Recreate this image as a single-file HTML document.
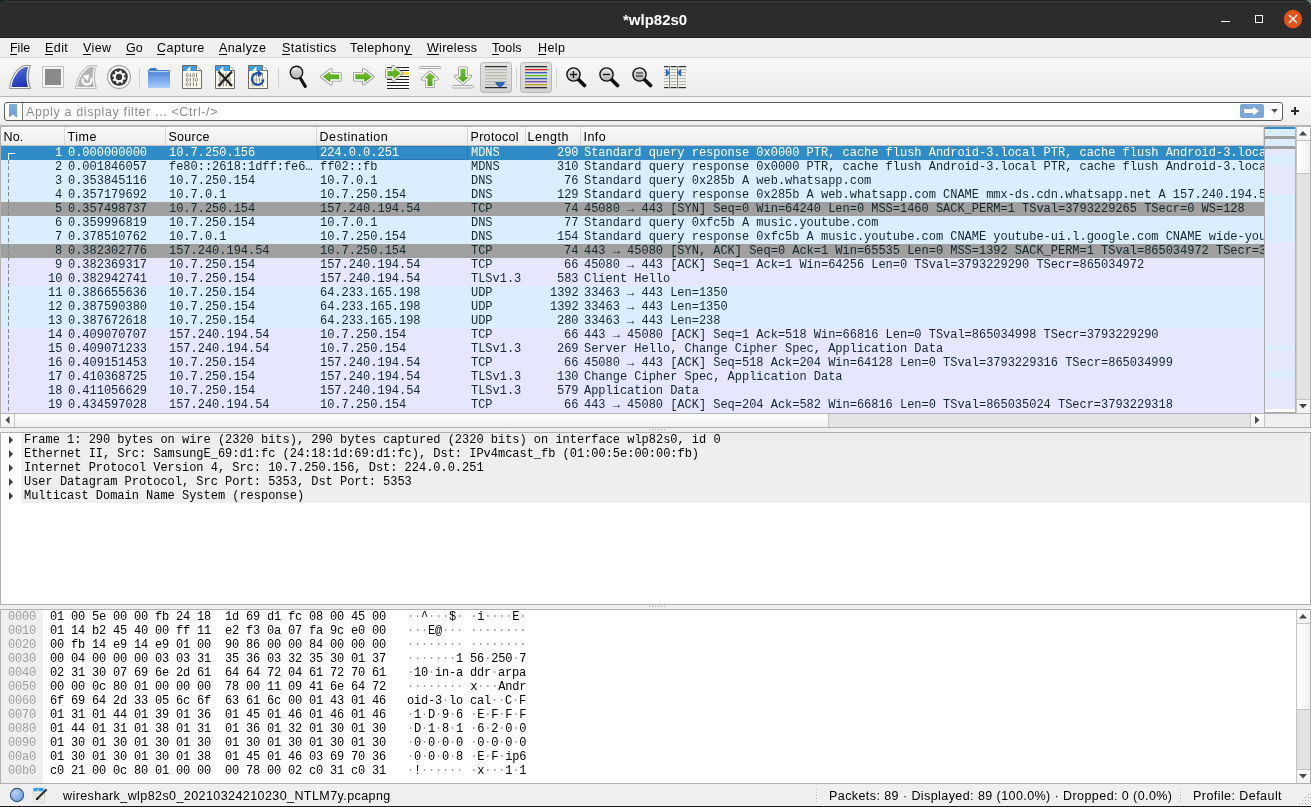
<!DOCTYPE html>
<html><head><meta charset="utf-8"><style>
html,body{margin:0;padding:0}
body{width:1311px;height:807px;overflow:hidden;position:relative;background:#efefef;font-family:"Liberation Sans",sans-serif}
#root{position:absolute;left:0;top:0;width:1311px;height:807px;overflow:hidden;will-change:transform}
.r{position:absolute}
.t{position:absolute;white-space:pre;line-height:normal;font-family:"Liberation Sans",sans-serif}
.m{position:absolute;white-space:pre;font-family:"Liberation Mono",monospace;font-size:12px;letter-spacing:-0.02px;line-height:14px;height:14px}
.h{letter-spacing:-0.2px}
</style></head><body><div id="root">
<div class="r" style="left:0px;top:0px;width:1311px;height:38px;background:#2c2c2c;"></div>
<div class="r" style="left:0px;top:0px;width:1311px;height:1px;background:#1f2020;"></div>
<div class="r" style="left:6px;top:1px;width:1299px;height:1px;background:#3c3c3c;"></div>
<div class="r" style="left:0px;top:37px;width:1311px;height:1px;background:#202020;"></div>
<svg class="r" style="left:0;top:0" width="7" height="7"><path d="M6.5,0 A6.5,6.5 0 0 0 0,6.5 V0 Z" fill="#1a2328"/><path d="M0.8,6.5 A5.7,5.7 0 0 1 6.5,0.8" fill="none" stroke="#3c3c3c" stroke-width="0.9"/></svg>
<svg class="r" style="left:1304px;top:0" width="7" height="7"><path d="M0.5,0 A6.5,6.5 0 0 1 7,6.5 V0 Z" fill="#6a7f7b"/><path d="M0.5,0.8 A5.7,5.7 0 0 1 6.2,6.5" fill="none" stroke="#2f3232" stroke-width="0.9"/></svg>
<div class="t" style="left:623px;top:11px;font-size:15px;color:#ffffff;letter-spacing:0.000px;font-weight:bold;">*wlp82s0</div>
<div class="r" style="left:1221px;top:20.5px;width:8.5px;height:1.6px;background:#ffffff;"></div>
<div class="r" style="left:1255px;top:15px;width:8px;height:8px;background:transparent;border:1.5px solid #fff;box-sizing:border-box"></div>
<svg class="r" style="left:1283px;top:9px" width="20" height="20" viewBox="0 0 20 20"><circle cx="10" cy="10" r="9.2" fill="#e2521d"/><path d="M6 6L14 14M14 6L6 14" stroke="#fff" stroke-width="1.4"/></svg>
<div class="r" style="left:0px;top:38px;width:1311px;height:19px;background:#efefef;"></div>
<div class="t" style="left:10px;top:41px;font-size:12.5px;color:#000;letter-spacing:-0.016px;">File</div>
<div class="r" style="left:10px;top:54px;width:7px;height:1px;background:#000;"></div>
<div class="t" style="left:45px;top:41px;font-size:12.5px;color:#000;letter-spacing:0.426px;">Edit</div>
<div class="r" style="left:45px;top:54px;width:8px;height:1px;background:#000;"></div>
<div class="t" style="left:83px;top:41px;font-size:12.5px;color:#000;letter-spacing:0.402px;">View</div>
<div class="r" style="left:83px;top:54px;width:8px;height:1px;background:#000;"></div>
<div class="t" style="left:126px;top:41px;font-size:12.5px;color:#000;letter-spacing:-0.023px;">Go</div>
<div class="r" style="left:126px;top:54px;width:9px;height:1px;background:#000;"></div>
<div class="t" style="left:157px;top:41px;font-size:12.5px;color:#000;letter-spacing:0.462px;">Capture</div>
<div class="r" style="left:157px;top:54px;width:8px;height:1px;background:#000;"></div>
<div class="t" style="left:219px;top:41px;font-size:12.5px;color:#000;letter-spacing:0.402px;">Analyze</div>
<div class="r" style="left:219px;top:54px;width:8px;height:1px;background:#000;"></div>
<div class="t" style="left:282px;top:41px;font-size:12.5px;color:#000;letter-spacing:0.484px;">Statistics</div>
<div class="r" style="left:282px;top:54px;width:8px;height:1px;background:#000;"></div>
<div class="t" style="left:350px;top:41px;font-size:12.5px;color:#000;letter-spacing:0.408px;">Telephony</div>
<div class="r" style="left:405px;top:54px;width:7px;height:1px;background:#000;"></div>
<div class="t" style="left:427px;top:41px;font-size:12.5px;color:#000;letter-spacing:0.287px;">Wireless</div>
<div class="r" style="left:427px;top:54px;width:12px;height:1px;background:#000;"></div>
<div class="t" style="left:492px;top:41px;font-size:12.5px;color:#000;letter-spacing:0.075px;">Tools</div>
<div class="r" style="left:492px;top:54px;width:7px;height:1px;background:#000;"></div>
<div class="t" style="left:538px;top:41px;font-size:12.5px;color:#000;letter-spacing:0.410px;">Help</div>
<div class="r" style="left:538px;top:54px;width:8px;height:1px;background:#000;"></div>
<div class="r" style="left:0px;top:57px;width:1311px;height:1px;background:#d6d6d6;"></div>
<div class="r" style="left:0px;top:58px;width:1311px;height:38px;background:linear-gradient(#f8f8f8,#ececec);"></div>
<div class="r" style="left:0px;top:96px;width:1311px;height:1px;background:#b8b8b8;"></div>
<svg class="r" style="left:0;top:0" width="1311" height="97" viewBox="0 0 1311 97"><defs><linearGradient id="gBlue" x1="0.3" y1="0" x2="0.6" y2="1"><stop offset="0" stop-color="#5a72d8"/><stop offset="0.5" stop-color="#3550c8"/><stop offset="1" stop-color="#1e34b0"/></linearGradient><linearGradient id="gFold" x1="0" y1="0" x2="0" y2="1"><stop offset="0" stop-color="#3b76cc"/><stop offset="1" stop-color="#a9ccff"/></linearGradient><linearGradient id="gGreen" x1="0" y1="0" x2="0" y2="1"><stop offset="0" stop-color="#74c232"/><stop offset="1" stop-color="#4ea414"/></linearGradient><linearGradient id="gLens" x1="0" y1="0" x2="0" y2="1"><stop offset="0" stop-color="#e8e8e8"/><stop offset="1" stop-color="#b0b0b0"/></linearGradient><linearGradient id="gBtn" x1="0" y1="0" x2="0" y2="1"><stop offset="0" stop-color="#e2e2e2"/><stop offset="1" stop-color="#d2d2d2"/></linearGradient></defs><path d="M9,89 C10,77 16.5,67 25,65 H31.2 C28.3,71.5 28.3,81 31.2,89 Z" fill="#939393"/><path d="M10.2,88 C11.2,77.5 17.3,68 25.3,66 H29.7 C27.1,72 27.1,81 29.6,88 Z" fill="#fff"/><path d="M11.5,87 C12.5,78 18.2,69 25.6,67 H28.3 C26,72.5 26,81 28.1,87 Z" fill="url(#gBlue)"/><rect x="42.5" y="66.5" width="21" height="21" fill="#f6f6f6" stroke="#c2c2c2" stroke-width="1"/><rect x="45" y="69" width="16" height="16" fill="#8a8a8a"/><path d="M75,89 C76,77 82.5,67 91,65 H97.2 C94.3,71.5 94.3,81 97.2,89 Z" fill="#bdbdbd"/><path d="M76.2,88 C77.2,77.5 83.3,68 91.3,66 H95.7 C93.1,72 93.1,81 95.6,88 Z" fill="#f6f6f6"/><path d="M77.5,87 C78.5,78 84.2,69 91.6,67 H94.3 C92,72.5 92,81 94.1,87 Z" fill="#b3b3b3"/><path d="M82.6,78.5 A4.6,4.6 0 1 0 91.2,78" fill="none" stroke="#fff" stroke-width="2.3"/><path d="M82.3,75.8 L89.2,74.6 L87.8,81 Z" fill="#fff"/><circle cx="119" cy="77" r="11.4" fill="#fdfdfd" stroke="#9e9e9e" stroke-width="1.1"/><circle cx="119" cy="77" r="8.8" fill="#383838"/><rect x="117.9" y="70.3" width="2.2" height="3" fill="#fff" transform="rotate(15 119 77)"/><rect x="117.9" y="70.3" width="2.2" height="3" fill="#fff" transform="rotate(60 119 77)"/><rect x="117.9" y="70.3" width="2.2" height="3" fill="#fff" transform="rotate(105 119 77)"/><rect x="117.9" y="70.3" width="2.2" height="3" fill="#fff" transform="rotate(150 119 77)"/><rect x="117.9" y="70.3" width="2.2" height="3" fill="#fff" transform="rotate(195 119 77)"/><rect x="117.9" y="70.3" width="2.2" height="3" fill="#fff" transform="rotate(240 119 77)"/><rect x="117.9" y="70.3" width="2.2" height="3" fill="#fff" transform="rotate(285 119 77)"/><rect x="117.9" y="70.3" width="2.2" height="3" fill="#fff" transform="rotate(330 119 77)"/><circle cx="119" cy="77" r="5.3" fill="#fff"/><circle cx="119" cy="77" r="3.2" fill="#383838"/><rect x="139" y="68" width="1" height="19" fill="#d0d0d0"/><path d="M148,70 H149 Q149,68 151,68 H156 Q157,68 157,70 H169 Q170,70 170,71 V87 Q170,88 169,88 H149 Q148,88 148,87 Z" fill="url(#gFold)"/><rect x="149" y="71.3" width="20" height="0.8" fill="#e8f0ff"/><path d="M182.5,65.5 H196.5 L201.5,70.5 V88.5 H182.5 Z" fill="#fbfaec" stroke="#6a6a6a" stroke-width="1"/><path d="M183,66 H196.3 L201,70.7 V71 H183 Z" fill="#3a9fe6"/><path d="M186.5,71 C187.5,68.5 189.5,67 191,66.6 C190.2,68 190,69.8 190.6,71 Z" fill="#fff"/><path d="M196.5,65.5 V70.5 H201.5" fill="#fff" stroke="#6a6a6a" stroke-width="0.9"/><ellipse cx="187.2" cy="75.2" rx="1.1" ry="1.7" fill="none" stroke="#8a8a84" stroke-width="0.9"/><path d="M190.29999999999998,73.4 V77.0" stroke="#8a8a84" stroke-width="1.1"/><ellipse cx="193.39999999999998" cy="75.2" rx="1.1" ry="1.7" fill="none" stroke="#8a8a84" stroke-width="0.9"/><path d="M196.5,73.4 V77.0" stroke="#8a8a84" stroke-width="1.1"/><ellipse cx="187.2" cy="79.8" rx="1.1" ry="1.7" fill="none" stroke="#8a8a84" stroke-width="0.9"/><path d="M190.29999999999998,78.0 V81.6" stroke="#8a8a84" stroke-width="1.1"/><path d="M193.39999999999998,78.0 V81.6" stroke="#8a8a84" stroke-width="1.1"/><ellipse cx="196.5" cy="79.8" rx="1.1" ry="1.7" fill="none" stroke="#8a8a84" stroke-width="0.9"/><ellipse cx="187.2" cy="84.4" rx="1.1" ry="1.7" fill="none" stroke="#8a8a84" stroke-width="0.9"/><path d="M190.29999999999998,82.60000000000001 V86.2" stroke="#8a8a84" stroke-width="1.1"/><path d="M193.39999999999998,82.60000000000001 V86.2" stroke="#8a8a84" stroke-width="1.1"/><path d="M196.5,82.60000000000001 V86.2" stroke="#8a8a84" stroke-width="1.1"/><path d="M215.5,65.5 H229.5 L234.5,70.5 V88.5 H215.5 Z" fill="#fbfaec" stroke="#6a6a6a" stroke-width="1"/><path d="M216,66 H229.3 L234,70.7 V71 H216 Z" fill="#3a9fe6"/><path d="M219.5,71 C220.5,68.5 222.5,67 224,66.6 C223.2,68 223,69.8 223.6,71 Z" fill="#fff"/><path d="M229.5,65.5 V70.5 H234.5" fill="#fff" stroke="#6a6a6a" stroke-width="0.9"/><ellipse cx="220.2" cy="75.2" rx="1.1" ry="1.7" fill="none" stroke="#8a8a84" stroke-width="0.9"/><path d="M223.29999999999998,73.4 V77.0" stroke="#8a8a84" stroke-width="1.1"/><ellipse cx="226.39999999999998" cy="75.2" rx="1.1" ry="1.7" fill="none" stroke="#8a8a84" stroke-width="0.9"/><path d="M229.5,73.4 V77.0" stroke="#8a8a84" stroke-width="1.1"/><ellipse cx="220.2" cy="79.8" rx="1.1" ry="1.7" fill="none" stroke="#8a8a84" stroke-width="0.9"/><path d="M223.29999999999998,78.0 V81.6" stroke="#8a8a84" stroke-width="1.1"/><path d="M226.39999999999998,78.0 V81.6" stroke="#8a8a84" stroke-width="1.1"/><ellipse cx="229.5" cy="79.8" rx="1.1" ry="1.7" fill="none" stroke="#8a8a84" stroke-width="0.9"/><ellipse cx="220.2" cy="84.4" rx="1.1" ry="1.7" fill="none" stroke="#8a8a84" stroke-width="0.9"/><path d="M223.29999999999998,82.60000000000001 V86.2" stroke="#8a8a84" stroke-width="1.1"/><path d="M226.39999999999998,82.60000000000001 V86.2" stroke="#8a8a84" stroke-width="1.1"/><path d="M229.5,82.60000000000001 V86.2" stroke="#8a8a84" stroke-width="1.1"/><path d="M248.5,65.5 H262.5 L267.5,70.5 V88.5 H248.5 Z" fill="#fbfaec" stroke="#6a6a6a" stroke-width="1"/><path d="M249,66 H262.3 L267,70.7 V71 H249 Z" fill="#3a9fe6"/><path d="M252.5,71 C253.5,68.5 255.5,67 257,66.6 C256.2,68 256,69.8 256.6,71 Z" fill="#fff"/><path d="M262.5,65.5 V70.5 H267.5" fill="#fff" stroke="#6a6a6a" stroke-width="0.9"/><ellipse cx="253.2" cy="75.2" rx="1.1" ry="1.7" fill="none" stroke="#8a8a84" stroke-width="0.9"/><path d="M256.3,73.4 V77.0" stroke="#8a8a84" stroke-width="1.1"/><ellipse cx="259.4" cy="75.2" rx="1.1" ry="1.7" fill="none" stroke="#8a8a84" stroke-width="0.9"/><path d="M262.5,73.4 V77.0" stroke="#8a8a84" stroke-width="1.1"/><ellipse cx="253.2" cy="79.8" rx="1.1" ry="1.7" fill="none" stroke="#8a8a84" stroke-width="0.9"/><path d="M256.3,78.0 V81.6" stroke="#8a8a84" stroke-width="1.1"/><path d="M259.4,78.0 V81.6" stroke="#8a8a84" stroke-width="1.1"/><ellipse cx="262.5" cy="79.8" rx="1.1" ry="1.7" fill="none" stroke="#8a8a84" stroke-width="0.9"/><ellipse cx="253.2" cy="84.4" rx="1.1" ry="1.7" fill="none" stroke="#8a8a84" stroke-width="0.9"/><path d="M256.3,82.60000000000001 V86.2" stroke="#8a8a84" stroke-width="1.1"/><path d="M259.4,82.60000000000001 V86.2" stroke="#8a8a84" stroke-width="1.1"/><path d="M262.5,82.60000000000001 V86.2" stroke="#8a8a84" stroke-width="1.1"/><path d="M218.5,71.5 L232,86 M232,71.5 L218.5,86" stroke="#222" stroke-width="2.2"/><path d="M263.5,79.5 A5.8,5.8 0 1 1 259,73.3" fill="none" stroke="#1e4f9e" stroke-width="2.2"/><path d="M257.5,70 L263,73.5 L258,77 Z" fill="#1e4f9e"/><rect x="278" y="68" width="1" height="19" fill="#d0d0d0"/><path d="M300.5,78.5 L305.3,86.3" stroke="#111" stroke-width="3.2" stroke-linecap="round"/><circle cx="296.5" cy="72.5" r="6.2" fill="url(#gLens)" stroke="#111" stroke-width="1.4"/><path d="M292.5,71 A4,4 0 0 1 296,68.5" fill="none" stroke="#fff" stroke-width="1"/><path d="M321.6,76.8 L331,69.6 V73.5 H340.1 V80 H331 V83.9 Z" fill="none" stroke="#8c8c8c" stroke-width="3" stroke-linejoin="round"/><path d="M321.6,76.8 L331,69.6 V73.5 H340.1 V80 H331 V83.9 Z" fill="url(#gGreen)" stroke="#fff" stroke-width="1.4" stroke-linejoin="round"/><path d="M373,76.8 L363.6,69.6 V73.5 H354.5 V80 H363.6 V83.9 Z" fill="none" stroke="#8c8c8c" stroke-width="3" stroke-linejoin="round"/><path d="M373,76.8 L363.6,69.6 V73.5 H354.5 V80 H363.6 V83.9 Z" fill="url(#gGreen)" stroke="#fff" stroke-width="1.4" stroke-linejoin="round"/><rect x="386" y="66" width="24" height="3" fill="#fff" opacity="0.45"/><rect x="387" y="67" width="22" height="1" fill="#222"/><rect x="386" y="69" width="24" height="3" fill="#fff" opacity="0.45"/><rect x="387" y="70" width="22" height="1" fill="#222"/><rect x="386" y="75" width="24" height="3" fill="#fff" opacity="0.45"/><rect x="387" y="76" width="22" height="1" fill="#222"/><rect x="386" y="78" width="24" height="3" fill="#fff" opacity="0.45"/><rect x="387" y="79" width="22" height="1" fill="#222"/><rect x="386" y="81" width="24" height="3" fill="#fff" opacity="0.45"/><rect x="387" y="82" width="22" height="1" fill="#222"/><rect x="386" y="84" width="24" height="3" fill="#fff" opacity="0.45"/><rect x="387" y="85" width="22" height="1" fill="#222"/><rect x="386" y="87" width="24" height="3" fill="#fff" opacity="0.45"/><rect x="387" y="88" width="22" height="1" fill="#222"/><rect x="402" y="72" width="7" height="3" fill="#f8e040"/><path d="M401.8,73.3 L393,66.3 V70.3 H386.7 V76.9 H393 V80.2 Z" fill="none" stroke="#8c8c8c" stroke-width="3" stroke-linejoin="round"/><path d="M401.8,73.3 L393,66.3 V70.3 H386.7 V76.9 H393 V80.2 Z" fill="url(#gGreen)" stroke="#fff" stroke-width="1.4" stroke-linejoin="round"/><rect x="419.5" y="66.5" width="21" height="2" rx="1" fill="#fff" stroke="#a8a8a8" stroke-width="1"/><path d="M430,72 L437.6,79 H433.2 V86.6 H426.8 V79 H422.4 Z" fill="none" stroke="#8c8c8c" stroke-width="3" stroke-linejoin="round"/><path d="M430,72 L437.6,79 H433.2 V86.6 H426.8 V79 H422.4 Z" fill="url(#gGreen)" stroke="#fff" stroke-width="1.4" stroke-linejoin="round"/><path d="M463,83.2 L470.6,76.2 H466.2 V68 H459.8 V76.2 H455.4 Z" fill="none" stroke="#8c8c8c" stroke-width="3" stroke-linejoin="round"/><path d="M463,83.2 L470.6,76.2 H466.2 V68 H459.8 V76.2 H455.4 Z" fill="url(#gGreen)" stroke="#fff" stroke-width="1.4" stroke-linejoin="round"/><rect x="452.5" y="85.5" width="21" height="2.5" rx="1.2" fill="#fff" stroke="#a8a8a8" stroke-width="1"/><rect x="480.5" y="62.5" width="31" height="30" rx="3" fill="url(#gBtn)" stroke="#b6b6b6" stroke-width="1"/><rect x="485" y="66" width="22" height="1.2" fill="#2a2a2a"/><rect x="485" y="69" width="22" height="1.2" fill="#b8b8a8"/><rect x="485" y="72" width="22" height="1.2" fill="#b8b8a8"/><rect x="485" y="75" width="22" height="1.2" fill="#b8b8a8"/><rect x="485" y="78" width="22" height="1.2" fill="#b8b8a8"/><rect x="485" y="81" width="22" height="1.2" fill="#b8b8a8"/><rect x="485" y="84" width="22" height="1.2" fill="#b8b8a8"/><rect x="485" y="87" width="22" height="1.2" fill="#2a2a2a"/><path d="M495,82 H505 Q503,87 500,87 Q497,87 495,82 Z" fill="#2f6ab8"/><rect x="516" y="68" width="1" height="19" fill="#d0d0d0"/><rect x="520.5" y="62.5" width="31" height="30" rx="3" fill="url(#gBtn)" stroke="#b6b6b6" stroke-width="1"/><rect x="525" y="66" width="22" height="1.3" fill="#2a2a2a"/><rect x="525" y="69" width="22" height="1.3" fill="#e02020"/><rect x="525" y="72" width="22" height="1.3" fill="#2f5fb8"/><rect x="525" y="75" width="22" height="1.3" fill="#60c020"/><rect x="525" y="78" width="22" height="1.3" fill="#2f5fb8"/><rect x="525" y="81" width="22" height="1.3" fill="#7a4aa0"/><rect x="525" y="84" width="22" height="1.3" fill="#c8a020"/><rect x="525" y="87" width="22" height="1.3" fill="#2a2a2a"/><rect x="556" y="68" width="1" height="19" fill="#d0d0d0"/><path d="M577.5,78.5 L584.5,85.5" stroke="#111" stroke-width="3.8" stroke-linecap="round"/><circle cx="573.5" cy="74.5" r="6.6" fill="url(#gLens)" stroke="#111" stroke-width="1.4"/><path d="M570.0,74.5 H577.0 M573.5,71 V78" stroke="#111" stroke-width="1.3"/><path d="M610.5,78.5 L617.5,85.5" stroke="#111" stroke-width="3.8" stroke-linecap="round"/><circle cx="606.5" cy="74.5" r="6.6" fill="url(#gLens)" stroke="#111" stroke-width="1.4"/><path d="M603.0,74.5 H610.0" stroke="#111" stroke-width="1.3"/><path d="M643.5,78.5 L650.5,85.5" stroke="#111" stroke-width="3.8" stroke-linecap="round"/><circle cx="639.5" cy="74.5" r="6.6" fill="url(#gLens)" stroke="#111" stroke-width="1.4"/><path d="M636.0,73 H643.0 M636.0,76 H643.0" stroke="#111" stroke-width="1"/><rect x="664" y="66" width="22" height="1.2" fill="#2a2a2a"/><rect x="664" y="69" width="22" height="1.1" fill="#b8b8a8"/><rect x="664" y="72" width="22" height="1.1" fill="#b8b8a8"/><rect x="664" y="75" width="22" height="1.1" fill="#b8b8a8"/><rect x="664" y="78" width="22" height="1.1" fill="#b8b8a8"/><rect x="664" y="81" width="22" height="1.1" fill="#b8b8a8"/><rect x="664" y="84" width="22" height="1.1" fill="#b8b8a8"/><rect x="664" y="87" width="22" height="1.2" fill="#2a2a2a"/><rect x="668.4" y="65.5" width="2.2" height="23" fill="#fafafa" opacity="0.7"/><rect x="676.4" y="65.5" width="2.2" height="23" fill="#fafafa" opacity="0.7"/><rect x="669" y="66" width="1" height="22" fill="#858580"/><rect x="677" y="66" width="1" height="22" fill="#858580"/><path d="M665.8,70 Q665.8,69.2 666.8,69.4 L669.9,72.8 L666.8,76.2 Q665.8,76.4 665.8,75.6 Z M681.2,70 Q681.2,69.2 680.2,69.4 L677.1,72.8 L680.2,76.2 Q681.2,76.4 681.2,75.6 Z" fill="#2f66b4"/></svg>
<div class="r" style="left:0px;top:97px;width:1311px;height:29px;background:linear-gradient(#f8f8f8,#eeeeee);"></div>
<div class="r" style="left:4px;top:102px;width:1279px;height:19px;background:#fff;border:1px solid #5c5c5c;border-radius:3px;box-sizing:border-box"></div>
<div class="r" style="left:22px;top:103px;width:1px;height:17px;background:#7a7a7a;"></div>
<svg class="r" style="left:8px;top:104px" width="10" height="15"><defs><linearGradient id="gBm" x1="0" y1="0" x2="0" y2="1"><stop offset="0" stop-color="#86afd9"/><stop offset="1" stop-color="#6a9bd3"/></linearGradient></defs><path d="M1 0H9V13.5L5 10.5L1 13.5Z" fill="url(#gBm)"/></svg>
<div class="t" style="left:26px;top:105px;font-size:12.5px;color:#8c8c8c;letter-spacing:0.626px;">Apply a display filter ... &lt;Ctrl-/&gt;</div>
<div class="r" style="left:1240px;top:104px;width:24px;height:14px;background:#7ba6d8;border-radius:2px"></div>
<svg class="r" style="left:1243px;top:106px" width="18" height="10"><path d="M1 3H10V0.5L16 5L10 9.5V7H1Z" fill="#fff"/></svg>
<svg class="r" style="left:1271px;top:109px" width="8" height="5"><path d="M0 0H7L3.5 4Z" fill="#555"/></svg>
<div class="r" style="left:1291px;top:110px;width:8px;height:2px;background:#2a2a2a;"></div>
<div class="r" style="left:1294px;top:107px;width:2px;height:8px;background:#2a2a2a;"></div>
<div class="r" style="left:0px;top:126px;width:1311px;height:302px;background:#efefef;"></div>
<div class="r" style="left:0px;top:125px;width:1311px;height:1px;background:#b4b4b4;"></div>
<div class="r" style="left:0px;top:126px;width:1311px;height:1px;background:#b8b8b8;"></div>
<div class="r" style="left:0px;top:126px;width:1px;height:302px;background:#b0b0b0;"></div>
<div class="r" style="left:1310px;top:126px;width:1px;height:302px;background:#b0b0b0;"></div>
<div class="r" style="left:0px;top:427px;width:1311px;height:1px;background:#b0b0b0;"></div>
<div class="r" style="left:1px;top:127px;width:1264px;height:18px;background:linear-gradient(#fbfbfb,#ececec);"></div>
<div class="r" style="left:1px;top:145px;width:1264px;height:1px;background:#c9c4c2;"></div>
<div class="t" style="left:3.5px;top:130px;font-size:12.5px;color:#000;letter-spacing:0.156px;">No.</div>
<div class="r" style="left:64px;top:127px;width:1px;height:18px;background:#d6d6d6;"></div>
<div class="t" style="left:67.5px;top:130px;font-size:12.5px;color:#000;letter-spacing:0.512px;">Time</div>
<div class="r" style="left:165px;top:127px;width:1px;height:18px;background:#d6d6d6;"></div>
<div class="t" style="left:168.5px;top:130px;font-size:12.5px;color:#000;letter-spacing:0.268px;">Source</div>
<div class="r" style="left:316px;top:127px;width:1px;height:18px;background:#d6d6d6;"></div>
<div class="t" style="left:319.5px;top:130px;font-size:12.5px;color:#000;letter-spacing:0.574px;">Destination</div>
<div class="r" style="left:467px;top:127px;width:1px;height:18px;background:#d6d6d6;"></div>
<div class="t" style="left:470.5px;top:130px;font-size:12.5px;color:#000;letter-spacing:0.312px;">Protocol</div>
<div class="r" style="left:525px;top:127px;width:1px;height:18px;background:#d6d6d6;"></div>
<div class="t" style="left:527.5px;top:130px;font-size:12.5px;color:#000;letter-spacing:0.526px;">Length</div>
<div class="r" style="left:580px;top:127px;width:1px;height:18px;background:#d6d6d6;"></div>
<div class="t" style="left:583.5px;top:130px;font-size:12.5px;color:#000;letter-spacing:0.465px;">Info</div>
<div class="r" style="left:1263px;top:127px;width:1px;height:18px;background:#d6d6d6;"></div>
<div class="r" style="left:1px;top:146px;width:1263px;height:267px;overflow:hidden;background:#e7e6ff">
<div class="r" style="left:0px;top:0px;width:1264px;height:14px;background:#308cc6;"></div>
<div class="m" style="left:54px;top:0px;color:#ffffff;">1</div>
<div class="m" style="left:67px;top:0px;color:#ffffff;">0.000000000</div>
<div class="m" style="left:168px;top:0px;color:#ffffff;">10.7.250.156</div>
<div class="m" style="left:319px;top:0px;color:#ffffff;">224.0.0.251</div>
<div class="m" style="left:470px;top:0px;color:#ffffff;">MDNS</div>
<div class="m" style="left:556px;top:0px;color:#ffffff;">290</div>
<div class="m" style="left:583px;top:0px;color:#ffffff;">Standard query response 0x0000 PTR, cache flush Android-3.local PTR, cache flush Android-3.local PTR, cache flush</div>
<div class="r" style="left:0px;top:14px;width:1264px;height:14px;background:#daeeff;"></div>
<div class="m" style="left:54px;top:14px;color:#12272e;">2</div>
<div class="m" style="left:67px;top:14px;color:#12272e;">0.001846057</div>
<div class="m" style="left:168px;top:14px;color:#12272e;">fe80::2618:1dff:fe6…</div>
<div class="m" style="left:319px;top:14px;color:#12272e;">ff02::fb</div>
<div class="m" style="left:470px;top:14px;color:#12272e;">MDNS</div>
<div class="m" style="left:556px;top:14px;color:#12272e;">310</div>
<div class="m" style="left:583px;top:14px;color:#12272e;">Standard query response 0x0000 PTR, cache flush Android-3.local PTR, cache flush Android-3.local PTR, cache flush</div>
<div class="r" style="left:0px;top:28px;width:1264px;height:14px;background:#daeeff;"></div>
<div class="m" style="left:54px;top:28px;color:#12272e;">3</div>
<div class="m" style="left:67px;top:28px;color:#12272e;">0.353845116</div>
<div class="m" style="left:168px;top:28px;color:#12272e;">10.7.250.154</div>
<div class="m" style="left:319px;top:28px;color:#12272e;">10.7.0.1</div>
<div class="m" style="left:470px;top:28px;color:#12272e;">DNS</div>
<div class="m" style="left:563px;top:28px;color:#12272e;">76</div>
<div class="m" style="left:583px;top:28px;color:#12272e;">Standard query 0x285b A web.whatsapp.com</div>
<div class="r" style="left:0px;top:42px;width:1264px;height:14px;background:#daeeff;"></div>
<div class="m" style="left:54px;top:42px;color:#12272e;">4</div>
<div class="m" style="left:67px;top:42px;color:#12272e;">0.357179692</div>
<div class="m" style="left:168px;top:42px;color:#12272e;">10.7.0.1</div>
<div class="m" style="left:319px;top:42px;color:#12272e;">10.7.250.154</div>
<div class="m" style="left:470px;top:42px;color:#12272e;">DNS</div>
<div class="m" style="left:556px;top:42px;color:#12272e;">129</div>
<div class="m" style="left:583px;top:42px;color:#12272e;">Standard query response 0x285b A web.whatsapp.com CNAME mmx-ds.cdn.whatsapp.net A 157.240.194.54</div>
<div class="r" style="left:0px;top:56px;width:1264px;height:14px;background:#a0a0a0;"></div>
<div class="m" style="left:54px;top:56px;color:#12272e;">5</div>
<div class="m" style="left:67px;top:56px;color:#12272e;">0.357498737</div>
<div class="m" style="left:168px;top:56px;color:#12272e;">10.7.250.154</div>
<div class="m" style="left:319px;top:56px;color:#12272e;">157.240.194.54</div>
<div class="m" style="left:470px;top:56px;color:#12272e;">TCP</div>
<div class="m" style="left:563px;top:56px;color:#12272e;">74</div>
<div class="m" style="left:583px;top:56px;color:#12272e;">45080 → 443 [SYN] Seq=0 Win=64240 Len=0 MSS=1460 SACK_PERM=1 TSval=3793229265 TSecr=0 WS=128</div>
<div class="r" style="left:0px;top:70px;width:1264px;height:14px;background:#daeeff;"></div>
<div class="m" style="left:54px;top:70px;color:#12272e;">6</div>
<div class="m" style="left:67px;top:70px;color:#12272e;">0.359996819</div>
<div class="m" style="left:168px;top:70px;color:#12272e;">10.7.250.154</div>
<div class="m" style="left:319px;top:70px;color:#12272e;">10.7.0.1</div>
<div class="m" style="left:470px;top:70px;color:#12272e;">DNS</div>
<div class="m" style="left:563px;top:70px;color:#12272e;">77</div>
<div class="m" style="left:583px;top:70px;color:#12272e;">Standard query 0xfc5b A music.youtube.com</div>
<div class="r" style="left:0px;top:84px;width:1264px;height:14px;background:#daeeff;"></div>
<div class="m" style="left:54px;top:84px;color:#12272e;">7</div>
<div class="m" style="left:67px;top:84px;color:#12272e;">0.378510762</div>
<div class="m" style="left:168px;top:84px;color:#12272e;">10.7.0.1</div>
<div class="m" style="left:319px;top:84px;color:#12272e;">10.7.250.154</div>
<div class="m" style="left:470px;top:84px;color:#12272e;">DNS</div>
<div class="m" style="left:556px;top:84px;color:#12272e;">154</div>
<div class="m" style="left:583px;top:84px;color:#12272e;">Standard query response 0xfc5b A music.youtube.com CNAME youtube-ui.l.google.com CNAME wide-youtube.l.google.com</div>
<div class="r" style="left:0px;top:98px;width:1264px;height:14px;background:#a0a0a0;"></div>
<div class="m" style="left:54px;top:98px;color:#12272e;">8</div>
<div class="m" style="left:67px;top:98px;color:#12272e;">0.382302776</div>
<div class="m" style="left:168px;top:98px;color:#12272e;">157.240.194.54</div>
<div class="m" style="left:319px;top:98px;color:#12272e;">10.7.250.154</div>
<div class="m" style="left:470px;top:98px;color:#12272e;">TCP</div>
<div class="m" style="left:563px;top:98px;color:#12272e;">74</div>
<div class="m" style="left:583px;top:98px;color:#12272e;">443 → 45080 [SYN, ACK] Seq=0 Ack=1 Win=65535 Len=0 MSS=1392 SACK_PERM=1 TSval=865034972 TSecr=3793229265 WS=256</div>
<div class="r" style="left:0px;top:112px;width:1264px;height:14px;background:#e7e6ff;"></div>
<div class="m" style="left:54px;top:112px;color:#12272e;">9</div>
<div class="m" style="left:67px;top:112px;color:#12272e;">0.382369317</div>
<div class="m" style="left:168px;top:112px;color:#12272e;">10.7.250.154</div>
<div class="m" style="left:319px;top:112px;color:#12272e;">157.240.194.54</div>
<div class="m" style="left:470px;top:112px;color:#12272e;">TCP</div>
<div class="m" style="left:563px;top:112px;color:#12272e;">66</div>
<div class="m" style="left:583px;top:112px;color:#12272e;">45080 → 443 [ACK] Seq=1 Ack=1 Win=64256 Len=0 TSval=3793229290 TSecr=865034972</div>
<div class="r" style="left:0px;top:126px;width:1264px;height:14px;background:#e7e6ff;"></div>
<div class="m" style="left:47px;top:126px;color:#12272e;">10</div>
<div class="m" style="left:67px;top:126px;color:#12272e;">0.382942741</div>
<div class="m" style="left:168px;top:126px;color:#12272e;">10.7.250.154</div>
<div class="m" style="left:319px;top:126px;color:#12272e;">157.240.194.54</div>
<div class="m" style="left:470px;top:126px;color:#12272e;">TLSv1.3</div>
<div class="m" style="left:556px;top:126px;color:#12272e;">583</div>
<div class="m" style="left:583px;top:126px;color:#12272e;">Client Hello</div>
<div class="r" style="left:0px;top:140px;width:1264px;height:14px;background:#daeeff;"></div>
<div class="m" style="left:47px;top:140px;color:#12272e;">11</div>
<div class="m" style="left:67px;top:140px;color:#12272e;">0.386655636</div>
<div class="m" style="left:168px;top:140px;color:#12272e;">10.7.250.154</div>
<div class="m" style="left:319px;top:140px;color:#12272e;">64.233.165.198</div>
<div class="m" style="left:470px;top:140px;color:#12272e;">UDP</div>
<div class="m" style="left:549px;top:140px;color:#12272e;">1392</div>
<div class="m" style="left:583px;top:140px;color:#12272e;">33463 → 443 Len=1350</div>
<div class="r" style="left:0px;top:154px;width:1264px;height:14px;background:#daeeff;"></div>
<div class="m" style="left:47px;top:154px;color:#12272e;">12</div>
<div class="m" style="left:67px;top:154px;color:#12272e;">0.387590380</div>
<div class="m" style="left:168px;top:154px;color:#12272e;">10.7.250.154</div>
<div class="m" style="left:319px;top:154px;color:#12272e;">64.233.165.198</div>
<div class="m" style="left:470px;top:154px;color:#12272e;">UDP</div>
<div class="m" style="left:549px;top:154px;color:#12272e;">1392</div>
<div class="m" style="left:583px;top:154px;color:#12272e;">33463 → 443 Len=1350</div>
<div class="r" style="left:0px;top:168px;width:1264px;height:14px;background:#daeeff;"></div>
<div class="m" style="left:47px;top:168px;color:#12272e;">13</div>
<div class="m" style="left:67px;top:168px;color:#12272e;">0.387672618</div>
<div class="m" style="left:168px;top:168px;color:#12272e;">10.7.250.154</div>
<div class="m" style="left:319px;top:168px;color:#12272e;">64.233.165.198</div>
<div class="m" style="left:470px;top:168px;color:#12272e;">UDP</div>
<div class="m" style="left:556px;top:168px;color:#12272e;">280</div>
<div class="m" style="left:583px;top:168px;color:#12272e;">33463 → 443 Len=238</div>
<div class="r" style="left:0px;top:182px;width:1264px;height:14px;background:#e7e6ff;"></div>
<div class="m" style="left:47px;top:182px;color:#12272e;">14</div>
<div class="m" style="left:67px;top:182px;color:#12272e;">0.409070707</div>
<div class="m" style="left:168px;top:182px;color:#12272e;">157.240.194.54</div>
<div class="m" style="left:319px;top:182px;color:#12272e;">10.7.250.154</div>
<div class="m" style="left:470px;top:182px;color:#12272e;">TCP</div>
<div class="m" style="left:563px;top:182px;color:#12272e;">66</div>
<div class="m" style="left:583px;top:182px;color:#12272e;">443 → 45080 [ACK] Seq=1 Ack=518 Win=66816 Len=0 TSval=865034998 TSecr=3793229290</div>
<div class="r" style="left:0px;top:196px;width:1264px;height:14px;background:#e7e6ff;"></div>
<div class="m" style="left:47px;top:196px;color:#12272e;">15</div>
<div class="m" style="left:67px;top:196px;color:#12272e;">0.409071233</div>
<div class="m" style="left:168px;top:196px;color:#12272e;">157.240.194.54</div>
<div class="m" style="left:319px;top:196px;color:#12272e;">10.7.250.154</div>
<div class="m" style="left:470px;top:196px;color:#12272e;">TLSv1.3</div>
<div class="m" style="left:556px;top:196px;color:#12272e;">269</div>
<div class="m" style="left:583px;top:196px;color:#12272e;">Server Hello, Change Cipher Spec, Application Data</div>
<div class="r" style="left:0px;top:210px;width:1264px;height:14px;background:#e7e6ff;"></div>
<div class="m" style="left:47px;top:210px;color:#12272e;">16</div>
<div class="m" style="left:67px;top:210px;color:#12272e;">0.409151453</div>
<div class="m" style="left:168px;top:210px;color:#12272e;">10.7.250.154</div>
<div class="m" style="left:319px;top:210px;color:#12272e;">157.240.194.54</div>
<div class="m" style="left:470px;top:210px;color:#12272e;">TCP</div>
<div class="m" style="left:563px;top:210px;color:#12272e;">66</div>
<div class="m" style="left:583px;top:210px;color:#12272e;">45080 → 443 [ACK] Seq=518 Ack=204 Win=64128 Len=0 TSval=3793229316 TSecr=865034999</div>
<div class="r" style="left:0px;top:224px;width:1264px;height:14px;background:#e7e6ff;"></div>
<div class="m" style="left:47px;top:224px;color:#12272e;">17</div>
<div class="m" style="left:67px;top:224px;color:#12272e;">0.410368725</div>
<div class="m" style="left:168px;top:224px;color:#12272e;">10.7.250.154</div>
<div class="m" style="left:319px;top:224px;color:#12272e;">157.240.194.54</div>
<div class="m" style="left:470px;top:224px;color:#12272e;">TLSv1.3</div>
<div class="m" style="left:556px;top:224px;color:#12272e;">130</div>
<div class="m" style="left:583px;top:224px;color:#12272e;">Change Cipher Spec, Application Data</div>
<div class="r" style="left:0px;top:238px;width:1264px;height:14px;background:#e7e6ff;"></div>
<div class="m" style="left:47px;top:238px;color:#12272e;">18</div>
<div class="m" style="left:67px;top:238px;color:#12272e;">0.411056629</div>
<div class="m" style="left:168px;top:238px;color:#12272e;">10.7.250.154</div>
<div class="m" style="left:319px;top:238px;color:#12272e;">157.240.194.54</div>
<div class="m" style="left:470px;top:238px;color:#12272e;">TLSv1.3</div>
<div class="m" style="left:556px;top:238px;color:#12272e;">579</div>
<div class="m" style="left:583px;top:238px;color:#12272e;">Application Data</div>
<div class="r" style="left:0px;top:252px;width:1264px;height:14px;background:#e7e6ff;"></div>
<div class="m" style="left:47px;top:252px;color:#12272e;">19</div>
<div class="m" style="left:67px;top:252px;color:#12272e;">0.434597028</div>
<div class="m" style="left:168px;top:252px;color:#12272e;">157.240.194.54</div>
<div class="m" style="left:319px;top:252px;color:#12272e;">10.7.250.154</div>
<div class="m" style="left:470px;top:252px;color:#12272e;">TCP</div>
<div class="m" style="left:563px;top:252px;color:#12272e;">66</div>
<div class="m" style="left:583px;top:252px;color:#12272e;">443 → 45080 [ACK] Seq=204 Ack=582 Win=66816 Len=0 TSval=865035024 TSecr=3793229318</div>
<div class="r" style="left:316px;top:0px;width:151px;height:14px;background:transparent;border:1px solid #2a78ad;box-sizing:border-box"></div>
<div class="r" style="left:7px;top:14px;width:1px;height:253px;background:repeating-linear-gradient(#7f8a8f 0 4px,transparent 4px 6.5px);"></div>
<div class="r" style="left:7px;top:7px;width:7px;height:1px;background:#fff;"></div>
<div class="r" style="left:7px;top:7px;width:1px;height:7px;background:#fff;"></div>
</div>
<div class="r" style="left:1264px;top:127px;width:1px;height:286px;background:#a8a8a8;"></div>
<div class="r" style="left:1295px;top:127px;width:1px;height:286px;background:#a8a8a8;"></div>
<div class="r" style="left:1265px;top:127px;width:30px;height:285px;background:#fff;"></div>
<div class="r" style="left:1265px;top:127px;width:30px;height:2px;background:#308cc6;"></div>
<div class="r" style="left:1265px;top:129px;width:30px;height:7px;background:#daeeff;"></div>
<div class="r" style="left:1265px;top:136px;width:30px;height:2.7px;background:#a0a0a0;"></div>
<div class="r" style="left:1265px;top:138.7px;width:30px;height:7.3px;background:#daeeff;"></div>
<div class="r" style="left:1265px;top:146px;width:30px;height:2.8px;background:#a0a0a0;"></div>
<div class="r" style="left:1265px;top:148.8px;width:30px;height:6.2px;background:#e7e6ff;"></div>
<div class="r" style="left:1265px;top:155px;width:30px;height:10px;background:#daeeff;"></div>
<div class="r" style="left:1265px;top:165px;width:30px;height:29px;background:#e7e6ff;"></div>
<div class="r" style="left:1265px;top:194px;width:30px;height:47.5px;background:#daeeff;"></div>
<div class="r" style="left:1265px;top:241.5px;width:30px;height:103.5px;background:#e7e6ff;"></div>
<div class="r" style="left:1265px;top:345px;width:30px;height:6px;background:#daeeff;"></div>
<div class="r" style="left:1265px;top:351px;width:30px;height:20px;background:#e7e6ff;"></div>
<div class="r" style="left:1265px;top:371px;width:30px;height:6px;background:#daeeff;"></div>
<div class="r" style="left:1265px;top:377px;width:30px;height:31.6px;background:#e7e6ff;"></div>
<div class="r" style="left:1264px;top:412px;width:32px;height:1px;background:#a8a8a8;"></div>
<div class="r" style="left:1297px;top:127px;width:13px;height:286px;background:#e3e3e3;"></div>
<div class="r" style="left:1297px;top:127px;width:13px;height:14px;background:linear-gradient(#fff,#f2f2f2);border-bottom:1px solid #c4c4c4;box-sizing:border-box"></div>
<svg class="r" style="left:1299px;top:131px" width="9" height="5"><path d="M0 4.5H8L4 0Z" fill="#4a4a4a"/></svg>
<div class="r" style="left:1297px;top:141px;width:13px;height:33px;background:linear-gradient(90deg,#fff,#f0f0f0);border-bottom:1px solid #c4c4c4;box-sizing:border-box"></div>
<div class="r" style="left:1297px;top:399px;width:13px;height:14px;background:linear-gradient(#fff,#f2f2f2);border-top:1px solid #c4c4c4;box-sizing:border-box"></div>
<svg class="r" style="left:1299px;top:404px" width="9" height="5"><path d="M0 0H8L4 4.5Z" fill="#4a4a4a"/></svg>
<div class="r" style="left:1295px;top:127px;width:1px;height:286px;background:#b4b4b4;"></div>
<div class="r" style="left:1296px;top:127px;width:1px;height:286px;background:#c8c8c8;"></div>
<div class="r" style="left:1px;top:413px;width:1264px;height:14px;background:#e3e3e3;"></div>
<div class="r" style="left:1px;top:413px;width:1309px;height:1px;background:#b4b4b4;"></div>
<div class="r" style="left:1px;top:414px;width:14px;height:13px;background:linear-gradient(#fff,#f2f2f2);border-right:1px solid #c4c4c4;box-sizing:border-box"></div>
<svg class="r" style="left:5px;top:416px" width="5" height="9"><path d="M4.5 0V8L0.5 4Z" fill="#4a4a4a"/></svg>
<div class="r" style="left:15px;top:414px;width:814px;height:13px;background:linear-gradient(#fff,#f0f0f0);border-right:1px solid #c4c4c4;box-sizing:border-box"></div>
<div class="r" style="left:1250px;top:414px;width:14px;height:13px;background:linear-gradient(#fff,#f2f2f2);border-left:1px solid #c4c4c4;box-sizing:border-box"></div>
<svg class="r" style="left:1255px;top:416px" width="5" height="9"><path d="M0 0V8L4.5 4Z" fill="#4a4a4a"/></svg>
<div class="r" style="left:1264px;top:414px;width:46px;height:13px;background:#efefef;border-left:1px solid #c4c4c4;box-sizing:border-box"></div>
<div class="r" style="left:0px;top:428px;width:1311px;height:4px;background:#efefef;"></div>
<div class="r" style="left:649px;top:429px;width:1px;height:1px;background:#a0a0a0;"></div>
<div class="r" style="left:652px;top:429px;width:1px;height:1px;background:#a0a0a0;"></div>
<div class="r" style="left:655px;top:429px;width:1px;height:1px;background:#a0a0a0;"></div>
<div class="r" style="left:658px;top:429px;width:1px;height:1px;background:#a0a0a0;"></div>
<div class="r" style="left:661px;top:429px;width:1px;height:1px;background:#a0a0a0;"></div>
<div class="r" style="left:664px;top:429px;width:1px;height:1px;background:#a0a0a0;"></div>
<div class="r" style="left:0px;top:432px;width:1311px;height:173px;background:#fff;border:1px solid #b0b0b0;box-sizing:border-box"></div>
<div class="r" style="left:21px;top:433px;width:1289px;height:14px;background:#eeeeee;"></div>
<svg class="r" style="left:9px;top:436px" width="5" height="9"><path d="M0 0V8L4 4Z" fill="#3c3c3c"/></svg>
<div class="m" style="left:24px;top:433px;color:#000;">Frame 1: 290 bytes on wire (2320 bits), 290 bytes captured (2320 bits) on interface wlp82s0, id 0</div>
<div class="r" style="left:21px;top:447px;width:1289px;height:14px;background:#eeeeee;"></div>
<svg class="r" style="left:9px;top:450px" width="5" height="9"><path d="M0 0V8L4 4Z" fill="#3c3c3c"/></svg>
<div class="m" style="left:24px;top:447px;color:#000;">Ethernet II, Src: SamsungE_69:d1:fc (24:18:1d:69:d1:fc), Dst: IPv4mcast_fb (01:00:5e:00:00:fb)</div>
<div class="r" style="left:21px;top:461px;width:1289px;height:14px;background:#eeeeee;"></div>
<svg class="r" style="left:9px;top:464px" width="5" height="9"><path d="M0 0V8L4 4Z" fill="#3c3c3c"/></svg>
<div class="m" style="left:24px;top:461px;color:#000;">Internet Protocol Version 4, Src: 10.7.250.156, Dst: 224.0.0.251</div>
<div class="r" style="left:21px;top:475px;width:1289px;height:14px;background:#eeeeee;"></div>
<svg class="r" style="left:9px;top:478px" width="5" height="9"><path d="M0 0V8L4 4Z" fill="#3c3c3c"/></svg>
<div class="m" style="left:24px;top:475px;color:#000;">User Datagram Protocol, Src Port: 5353, Dst Port: 5353</div>
<div class="r" style="left:21px;top:489px;width:1289px;height:14px;background:#eeeeee;"></div>
<svg class="r" style="left:9px;top:492px" width="5" height="9"><path d="M0 0V8L4 4Z" fill="#3c3c3c"/></svg>
<div class="m" style="left:24px;top:489px;color:#000;">Multicast Domain Name System (response)</div>
<div class="r" style="left:0px;top:605px;width:1311px;height:4px;background:#efefef;"></div>
<div class="r" style="left:649px;top:606px;width:1px;height:1px;background:#a0a0a0;"></div>
<div class="r" style="left:652px;top:606px;width:1px;height:1px;background:#a0a0a0;"></div>
<div class="r" style="left:655px;top:606px;width:1px;height:1px;background:#a0a0a0;"></div>
<div class="r" style="left:658px;top:606px;width:1px;height:1px;background:#a0a0a0;"></div>
<div class="r" style="left:661px;top:606px;width:1px;height:1px;background:#a0a0a0;"></div>
<div class="r" style="left:664px;top:606px;width:1px;height:1px;background:#a0a0a0;"></div>
<div class="r" style="left:0px;top:609px;width:1311px;height:175px;background:#fff;border:1px solid #b0b0b0;box-sizing:border-box"></div>
<div class="r" style="left:1px;top:610px;width:42px;height:173px;background:#efefef;"></div>
<div class="m" style="left:8px;top:610px;color:#a0a0a0;letter-spacing:-0.2px">0000</div>
<div class="m" style="left:50px;top:610px;color:#000;letter-spacing:-0.2px">01 00 5e 00 00 fb 24 18  1d 69 d1 fc 08 00 45 00</div>
<div class="m" style="left:407px;top:610px;color:#000;letter-spacing:-0.2px"><span style="color:#9a9a9a">·</span><span style="color:#9a9a9a">·</span>^<span style="color:#9a9a9a">·</span><span style="color:#9a9a9a">·</span><span style="color:#9a9a9a">·</span>$<span style="color:#9a9a9a">·</span> <span style="color:#9a9a9a">·</span>i<span style="color:#9a9a9a">·</span><span style="color:#9a9a9a">·</span><span style="color:#9a9a9a">·</span><span style="color:#9a9a9a">·</span>E<span style="color:#9a9a9a">·</span></div>
<div class="m" style="left:8px;top:624px;color:#a0a0a0;letter-spacing:-0.2px">0010</div>
<div class="m" style="left:50px;top:624px;color:#000;letter-spacing:-0.2px">01 14 b2 45 40 00 ff 11  e2 f3 0a 07 fa 9c e0 00</div>
<div class="m" style="left:407px;top:624px;color:#000;letter-spacing:-0.2px"><span style="color:#9a9a9a">·</span><span style="color:#9a9a9a">·</span><span style="color:#9a9a9a">·</span>E@<span style="color:#9a9a9a">·</span><span style="color:#9a9a9a">·</span><span style="color:#9a9a9a">·</span> <span style="color:#9a9a9a">·</span><span style="color:#9a9a9a">·</span><span style="color:#9a9a9a">·</span><span style="color:#9a9a9a">·</span><span style="color:#9a9a9a">·</span><span style="color:#9a9a9a">·</span><span style="color:#9a9a9a">·</span><span style="color:#9a9a9a">·</span></div>
<div class="m" style="left:8px;top:638px;color:#a0a0a0;letter-spacing:-0.2px">0020</div>
<div class="m" style="left:50px;top:638px;color:#000;letter-spacing:-0.2px">00 fb 14 e9 14 e9 01 00  90 86 00 00 84 00 00 00</div>
<div class="m" style="left:407px;top:638px;color:#000;letter-spacing:-0.2px"><span style="color:#9a9a9a">·</span><span style="color:#9a9a9a">·</span><span style="color:#9a9a9a">·</span><span style="color:#9a9a9a">·</span><span style="color:#9a9a9a">·</span><span style="color:#9a9a9a">·</span><span style="color:#9a9a9a">·</span><span style="color:#9a9a9a">·</span> <span style="color:#9a9a9a">·</span><span style="color:#9a9a9a">·</span><span style="color:#9a9a9a">·</span><span style="color:#9a9a9a">·</span><span style="color:#9a9a9a">·</span><span style="color:#9a9a9a">·</span><span style="color:#9a9a9a">·</span><span style="color:#9a9a9a">·</span></div>
<div class="m" style="left:8px;top:652px;color:#a0a0a0;letter-spacing:-0.2px">0030</div>
<div class="m" style="left:50px;top:652px;color:#000;letter-spacing:-0.2px">00 04 00 00 00 03 03 31  35 36 03 32 35 30 01 37</div>
<div class="m" style="left:407px;top:652px;color:#000;letter-spacing:-0.2px"><span style="color:#9a9a9a">·</span><span style="color:#9a9a9a">·</span><span style="color:#9a9a9a">·</span><span style="color:#9a9a9a">·</span><span style="color:#9a9a9a">·</span><span style="color:#9a9a9a">·</span><span style="color:#9a9a9a">·</span>1 56<span style="color:#9a9a9a">·</span>250<span style="color:#9a9a9a">·</span>7</div>
<div class="m" style="left:8px;top:666px;color:#a0a0a0;letter-spacing:-0.2px">0040</div>
<div class="m" style="left:50px;top:666px;color:#000;letter-spacing:-0.2px">02 31 30 07 69 6e 2d 61  64 64 72 04 61 72 70 61</div>
<div class="m" style="left:407px;top:666px;color:#000;letter-spacing:-0.2px"><span style="color:#9a9a9a">·</span>10<span style="color:#9a9a9a">·</span>in-a ddr<span style="color:#9a9a9a">·</span>arpa</div>
<div class="m" style="left:8px;top:680px;color:#a0a0a0;letter-spacing:-0.2px">0050</div>
<div class="m" style="left:50px;top:680px;color:#000;letter-spacing:-0.2px">00 00 0c 80 01 00 00 00  78 00 11 09 41 6e 64 72</div>
<div class="m" style="left:407px;top:680px;color:#000;letter-spacing:-0.2px"><span style="color:#9a9a9a">·</span><span style="color:#9a9a9a">·</span><span style="color:#9a9a9a">·</span><span style="color:#9a9a9a">·</span><span style="color:#9a9a9a">·</span><span style="color:#9a9a9a">·</span><span style="color:#9a9a9a">·</span><span style="color:#9a9a9a">·</span> x<span style="color:#9a9a9a">·</span><span style="color:#9a9a9a">·</span><span style="color:#9a9a9a">·</span>Andr</div>
<div class="m" style="left:8px;top:694px;color:#a0a0a0;letter-spacing:-0.2px">0060</div>
<div class="m" style="left:50px;top:694px;color:#000;letter-spacing:-0.2px">6f 69 64 2d 33 05 6c 6f  63 61 6c 00 01 43 01 46</div>
<div class="m" style="left:407px;top:694px;color:#000;letter-spacing:-0.2px">oid-3<span style="color:#9a9a9a">·</span>lo cal<span style="color:#9a9a9a">·</span><span style="color:#9a9a9a">·</span>C<span style="color:#9a9a9a">·</span>F</div>
<div class="m" style="left:8px;top:708px;color:#a0a0a0;letter-spacing:-0.2px">0070</div>
<div class="m" style="left:50px;top:708px;color:#000;letter-spacing:-0.2px">01 31 01 44 01 39 01 36  01 45 01 46 01 46 01 46</div>
<div class="m" style="left:407px;top:708px;color:#000;letter-spacing:-0.2px"><span style="color:#9a9a9a">·</span>1<span style="color:#9a9a9a">·</span>D<span style="color:#9a9a9a">·</span>9<span style="color:#9a9a9a">·</span>6 <span style="color:#9a9a9a">·</span>E<span style="color:#9a9a9a">·</span>F<span style="color:#9a9a9a">·</span>F<span style="color:#9a9a9a">·</span>F</div>
<div class="m" style="left:8px;top:722px;color:#a0a0a0;letter-spacing:-0.2px">0080</div>
<div class="m" style="left:50px;top:722px;color:#000;letter-spacing:-0.2px">01 44 01 31 01 38 01 31  01 36 01 32 01 30 01 30</div>
<div class="m" style="left:407px;top:722px;color:#000;letter-spacing:-0.2px"><span style="color:#9a9a9a">·</span>D<span style="color:#9a9a9a">·</span>1<span style="color:#9a9a9a">·</span>8<span style="color:#9a9a9a">·</span>1 <span style="color:#9a9a9a">·</span>6<span style="color:#9a9a9a">·</span>2<span style="color:#9a9a9a">·</span>0<span style="color:#9a9a9a">·</span>0</div>
<div class="m" style="left:8px;top:736px;color:#a0a0a0;letter-spacing:-0.2px">0090</div>
<div class="m" style="left:50px;top:736px;color:#000;letter-spacing:-0.2px">01 30 01 30 01 30 01 30  01 30 01 30 01 30 01 30</div>
<div class="m" style="left:407px;top:736px;color:#000;letter-spacing:-0.2px"><span style="color:#9a9a9a">·</span>0<span style="color:#9a9a9a">·</span>0<span style="color:#9a9a9a">·</span>0<span style="color:#9a9a9a">·</span>0 <span style="color:#9a9a9a">·</span>0<span style="color:#9a9a9a">·</span>0<span style="color:#9a9a9a">·</span>0<span style="color:#9a9a9a">·</span>0</div>
<div class="m" style="left:8px;top:750px;color:#a0a0a0;letter-spacing:-0.2px">00a0</div>
<div class="m" style="left:50px;top:750px;color:#000;letter-spacing:-0.2px">01 30 01 30 01 30 01 38  01 45 01 46 03 69 70 36</div>
<div class="m" style="left:407px;top:750px;color:#000;letter-spacing:-0.2px"><span style="color:#9a9a9a">·</span>0<span style="color:#9a9a9a">·</span>0<span style="color:#9a9a9a">·</span>0<span style="color:#9a9a9a">·</span>8 <span style="color:#9a9a9a">·</span>E<span style="color:#9a9a9a">·</span>F<span style="color:#9a9a9a">·</span>ip6</div>
<div class="m" style="left:8px;top:764px;color:#a0a0a0;letter-spacing:-0.2px">00b0</div>
<div class="m" style="left:50px;top:764px;color:#000;letter-spacing:-0.2px">c0 21 00 0c 80 01 00 00  00 78 00 02 c0 31 c0 31</div>
<div class="m" style="left:407px;top:764px;color:#000;letter-spacing:-0.2px"><span style="color:#9a9a9a">·</span>!<span style="color:#9a9a9a">·</span><span style="color:#9a9a9a">·</span><span style="color:#9a9a9a">·</span><span style="color:#9a9a9a">·</span><span style="color:#9a9a9a">·</span><span style="color:#9a9a9a">·</span> <span style="color:#9a9a9a">·</span>x<span style="color:#9a9a9a">·</span><span style="color:#9a9a9a">·</span><span style="color:#9a9a9a">·</span>1<span style="color:#9a9a9a">·</span>1</div>
<div class="r" style="left:1297px;top:610px;width:13px;height:173px;background:#e3e3e3;"></div>
<div class="r" style="left:1297px;top:610px;width:13px;height:14px;background:linear-gradient(#fff,#f2f2f2);border-bottom:1px solid #c4c4c4;box-sizing:border-box"></div>
<svg class="r" style="left:1299px;top:614px" width="9" height="5"><path d="M0 4.5H8L4 0Z" fill="#4a4a4a"/></svg>
<div class="r" style="left:1297px;top:624px;width:13px;height:86px;background:linear-gradient(90deg,#fff,#f0f0f0);border-bottom:1px solid #c4c4c4;box-sizing:border-box"></div>
<div class="r" style="left:1297px;top:769px;width:13px;height:14px;background:linear-gradient(#fff,#f2f2f2);border-top:1px solid #c4c4c4;box-sizing:border-box"></div>
<svg class="r" style="left:1299px;top:774px" width="9" height="5"><path d="M0 0H8L4 4.5Z" fill="#4a4a4a"/></svg>
<div class="r" style="left:1296px;top:610px;width:1px;height:173px;background:#c4c4c4;"></div>
<div class="r" style="left:0px;top:784px;width:1311px;height:22px;background:#efefef;"></div>
<div class="r" style="left:0px;top:806px;width:1311px;height:1px;background:#1a1a1a;"></div>
<svg class="r" style="left:9px;top:787px" width="16" height="16"><defs><radialGradient id="gC" cx="0.35" cy="0.3" r="0.8"><stop offset="0" stop-color="#bcd4f4"/><stop offset="1" stop-color="#6a9ddf"/></radialGradient></defs><circle cx="8" cy="8" r="6.6" fill="url(#gC)" stroke="#3a5478" stroke-width="1.1"/></svg>
<svg class="r" style="left:32px;top:787px" width="16" height="16"><rect x="1.5" y="1" width="11" height="14" fill="#f2f2ea" stroke="#d0d0c8" stroke-width="0.8"/><rect x="1.5" y="1" width="10" height="3.3" fill="#2f9ee0"/><path d="M4.5 4.3Q5 2.5 6.5 1.6Q6 3 6.6 4.3Z" fill="#fff"/><path d="M3 6.5H9M3 9H8M3 12H10" stroke="#c8c8c0" stroke-width="0.8"/><path d="M5 12L14 3" stroke="#333" stroke-width="2.2" stroke-linecap="round"/><path d="M4.6 12.4L6 11" stroke="#000" stroke-width="1.5"/></svg>
<div class="t" style="left:63px;top:789px;font-size:12.5px;color:#000;letter-spacing:0.421px;">wireshark_wlp82s0_20210324210230_NTLM7y.pcapng</div>
<div class="r" style="left:816px;top:789px;width:1px;height:1px;background:#b4b4b4;"></div>
<div class="r" style="left:817px;top:790px;width:1px;height:1px;background:#ffffff;"></div>
<div class="r" style="left:816px;top:792px;width:1px;height:1px;background:#b4b4b4;"></div>
<div class="r" style="left:817px;top:793px;width:1px;height:1px;background:#ffffff;"></div>
<div class="r" style="left:816px;top:795px;width:1px;height:1px;background:#b4b4b4;"></div>
<div class="r" style="left:817px;top:796px;width:1px;height:1px;background:#ffffff;"></div>
<div class="r" style="left:816px;top:798px;width:1px;height:1px;background:#b4b4b4;"></div>
<div class="r" style="left:817px;top:799px;width:1px;height:1px;background:#ffffff;"></div>
<div class="r" style="left:816px;top:801px;width:1px;height:1px;background:#b4b4b4;"></div>
<div class="r" style="left:817px;top:802px;width:1px;height:1px;background:#ffffff;"></div>
<div class="r" style="left:1180px;top:789px;width:1px;height:1px;background:#b4b4b4;"></div>
<div class="r" style="left:1181px;top:790px;width:1px;height:1px;background:#ffffff;"></div>
<div class="r" style="left:1180px;top:792px;width:1px;height:1px;background:#b4b4b4;"></div>
<div class="r" style="left:1181px;top:793px;width:1px;height:1px;background:#ffffff;"></div>
<div class="r" style="left:1180px;top:795px;width:1px;height:1px;background:#b4b4b4;"></div>
<div class="r" style="left:1181px;top:796px;width:1px;height:1px;background:#ffffff;"></div>
<div class="r" style="left:1180px;top:798px;width:1px;height:1px;background:#b4b4b4;"></div>
<div class="r" style="left:1181px;top:799px;width:1px;height:1px;background:#ffffff;"></div>
<div class="r" style="left:1180px;top:801px;width:1px;height:1px;background:#b4b4b4;"></div>
<div class="r" style="left:1181px;top:802px;width:1px;height:1px;background:#ffffff;"></div>
<div class="t" style="left:829px;top:789px;font-size:12.5px;color:#000;letter-spacing:0.426px;">Packets: 89 · Displayed: 89 (100.0%) · Dropped: 0 (0.0%)</div>
<div class="t" style="left:1193px;top:789px;font-size:12.5px;color:#000;letter-spacing:0.439px;">Profile: Default</div>
<div class="r" style="left:1299px;top:803px;width:1px;height:1px;background:#a8a8a8;"></div>
<div class="r" style="left:1302px;top:803px;width:1px;height:1px;background:#a8a8a8;"></div>
<div class="r" style="left:1305px;top:803px;width:1px;height:1px;background:#a8a8a8;"></div>
<div class="r" style="left:1308px;top:803px;width:1px;height:1px;background:#a8a8a8;"></div>
<div class="r" style="left:1302px;top:800px;width:1px;height:1px;background:#a8a8a8;"></div>
<div class="r" style="left:1305px;top:800px;width:1px;height:1px;background:#a8a8a8;"></div>
<div class="r" style="left:1308px;top:800px;width:1px;height:1px;background:#a8a8a8;"></div>
<div class="r" style="left:1305px;top:797px;width:1px;height:1px;background:#a8a8a8;"></div>
<div class="r" style="left:1308px;top:797px;width:1px;height:1px;background:#a8a8a8;"></div>
<div class="r" style="left:1308px;top:794px;width:1px;height:1px;background:#a8a8a8;"></div>
</div></body></html>
